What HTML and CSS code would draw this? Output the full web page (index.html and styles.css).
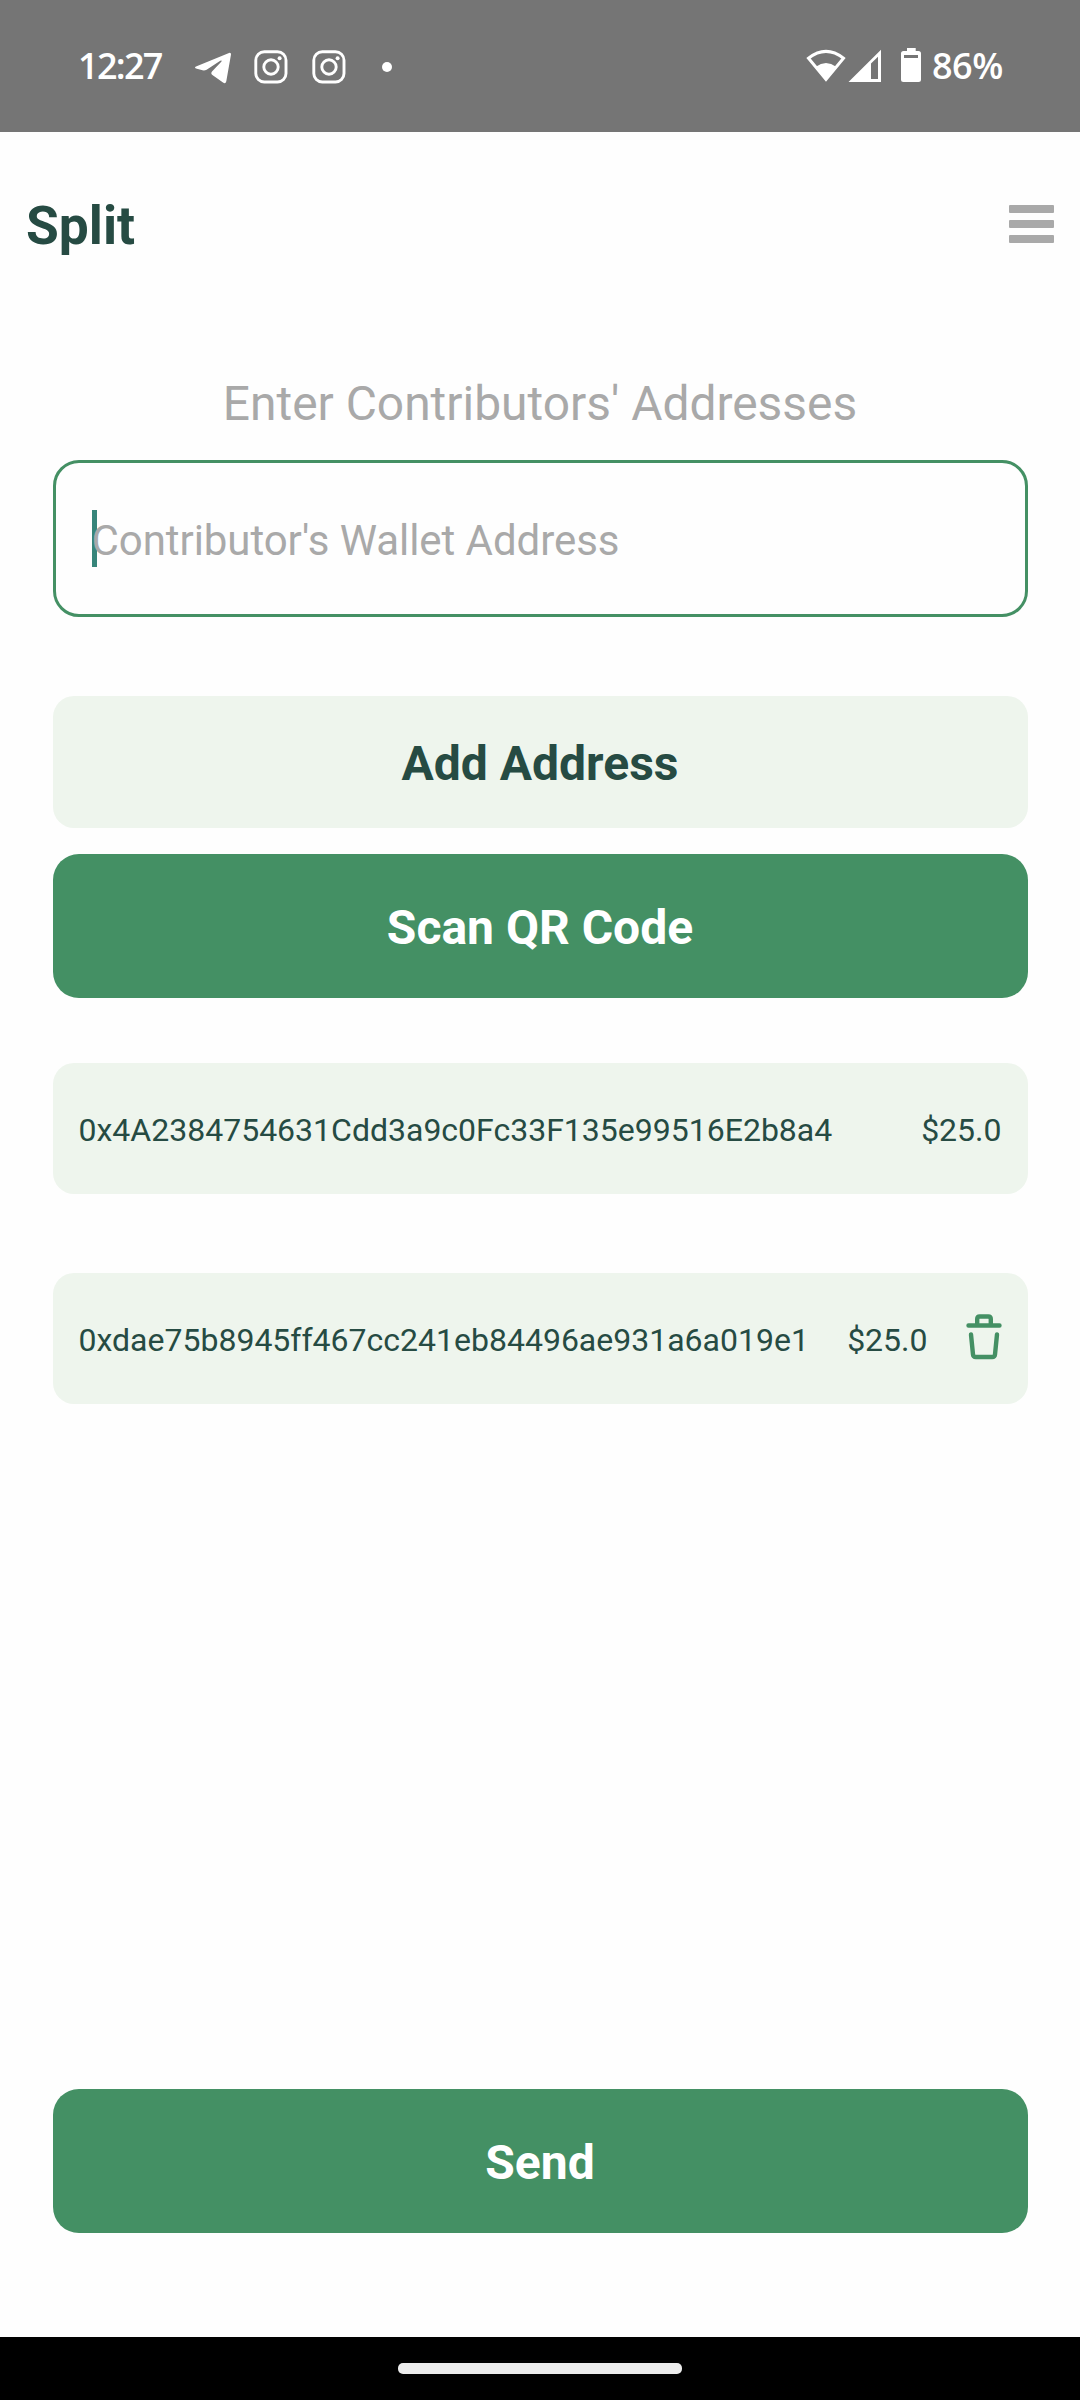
FILE: index.html
```html
<!DOCTYPE html>
<html lang="en">
<head>
<meta charset="utf-8">
<title>Split</title>
<link rel="stylesheet" href="styles.css">
</head>
<body>
<div class="screen">
  <div class="status-bar">
    <div class="status-left">
      <span class="clock">12:27</span>
      <svg class="telegram" width="38" height="34" viewBox="0 0 38 34" fill="#fff"><path d="M2 15.500 35 1.900Q37.200 1.200 37 3.500L32.300 30.300Q31.600 33.300 29 31.600L18.400 24Q16.400 22.500 18 20.600L27.500 10.500Q28.200 9.200 26.300 9.800L12.600 18.700Q10.600 19.800 8.500 19.300L2 17.600Q0 16.600 2 15.500Z"/></svg>
      <svg class="instagram" width="34" height="34" viewBox="0 0 34 34" fill="none" stroke="#fff" stroke-width="2.900"><rect x="1.800" y="1.800" width="30.200" height="30.200" rx="8.500"/><circle cx="17" cy="17" r="7.200"/><circle cx="25.600" cy="8.300" r="2" fill="#fff" stroke="none"/></svg>
      <svg class="instagram" width="34" height="34" viewBox="0 0 34 34" fill="none" stroke="#fff" stroke-width="2.900"><rect x="1.800" y="1.800" width="30.200" height="30.200" rx="8.500"/><circle cx="17" cy="17" r="7.200"/><circle cx="25.600" cy="8.300" r="2" fill="#fff" stroke="none"/></svg>
      <span class="more-dot"></span>
    </div>
    <div class="status-right">
      <svg class="wifi" width="40" height="34" viewBox="0 0 40 34"><path d="M2.500 9.200Q20-4.500 37.500 9.200L20 30.500Z" fill="none" stroke="#fff" stroke-width="3"/><path d="M9.800 17.700Q20 10.300 30.200 17.700L20 32Z" fill="#fff"/></svg>
      <svg class="signal" width="34" height="34" viewBox="0 0 34 34" fill="#fff" fill-rule="evenodd"><path d="M.500 33 33 .700V33ZM23 14.500V30H30V7.700Z"/></svg>
      <svg class="battery" width="20" height="34" viewBox="0 0 20 34" fill="#fff" fill-rule="evenodd"><path d="M6 0H14.700V3H17.500Q20 3 20 5.500V31.500Q20 34 17.500 34H2.500Q0 34 0 31.500V5.500Q0 3 2.500 3H6ZM3 7V10H17V7Z"/></svg>
      <span class="percent">86%</span>
    </div>
  </div>

  <header class="app-bar">
    <h1 class="title">Split</h1>
    <div class="menu"><span></span><span></span><span></span></div>
  </header>

  <main class="content">
    <p class="prompt">Enter Contributors' Addresses</p>
    <div class="field"><span class="caret"></span><span class="placeholder">Contributor's Wallet Address</span></div>
    <div class="button soft">Add Address</div>
    <div class="button solid scan">Scan QR Code</div>
    <div class="entry"><span class="address">0x4A2384754631Cdd3a9c0Fc33F135e99516E2b8a4</span><span class="amount">$25.0</span></div>
    <div class="entry"><span class="address">0xdae75b8945ff467cc241eb84496ae931a6a019e1</span><span class="amount">$25.0</span>
      <svg class="trash" width="36" height="46" viewBox="0 0 36 46" fill="none" stroke="#449064" stroke-width="4.400" stroke-linecap="round" stroke-linejoin="round"><path d="M2.500 11.500H33.500M11.200 11V5Q11.200 2.500 13.700 2.500H22.300Q24.800 2.500 24.800 5V11M5 20.500 7 40.500Q7.300 43 9.800 43H26.200Q28.700 43 29 40.500L31 20.500"/></svg>
    </div>
    <div class="button solid send">Send</div>
  </main>

  <div class="nav-bar"><span class="handle"></span></div>
</div>
</body>
</html>
```

FILE: styles.css
```css
* { box-sizing: border-box; }

body {
  margin: 0;
  font-family: Roboto, sans-serif;
  background: #fefefe;
}

.screen {
  display: flex;
  flex-direction: column;
  width: 1080px;
  height: 2400px;
  overflow: hidden;
}

.status-bar {
  display: flex;
  justify-content: space-between;
  height: 132px;
  padding: 0 76px 0 78px;
  background: #757575;
  color: #fff;
  font: 600 36px/36px "Open Sans", sans-serif;
}

.status-left,
.status-right {
  display: flex;
  align-items: flex-start;
}

.clock {
  width: 116px;
  padding-top: 48px;
  letter-spacing: -1.7px;
}

.telegram { margin: 51px 22px 0 0; }
.instagram { margin: 50px 24px 0 0; }

.more-dot {
  width: 10px;
  height: 10px;
  margin: 62px 0 0 12px;
  border-radius: 50%;
  background: #fff;
}

.wifi { margin-top: 49px; }
.signal { margin: 49px 19px 0 2px; }
.battery { margin: 48px 11px 0 0; }

.percent {
  width: 72px;
  padding-top: 48px;
  letter-spacing: -0.5px;
}

.app-bar {
  display: flex;
  justify-content: space-between;
  align-items: center;
  height: 188px;
  padding: 0 26px;
}

.title {
  margin: 0;
  color: #264b43;
  font-size: 53.3px;
  font-weight: 700;
  line-height: 62px;
}

.menu {
  display: flex;
  flex-direction: column;
  gap: 7px;
  width: 45px;
  margin-top: -4px;
}

.menu span {
  height: 8px;
  border-radius: 1px;
  background: #a9a9a9;
}

.content {
  display: flex;
  flex: 1;
  flex-direction: column;
  padding: 56px 52.5px 0;
}

.prompt {
  margin: 0 0 28px;
  color: #a9a9a9;
  font-size: 47.9px;
  line-height: 56px;
  text-align: center;
}

.field {
  display: flex;
  align-items: center;
  height: 157px;
  margin-bottom: 79px;
  padding-left: 36px;
  border: 3px solid #449064;
  border-radius: 26px;
}

.caret {
  width: 5px;
  height: 57px;
  margin-right: -5px;
  background: #37857a;
}

.placeholder {
  position: relative;
  padding-top: 5px;
  color: #a9a9a9;
  font-size: 42px;
  letter-spacing: -0.06px;
  line-height: 50px;
}

.button {
  display: flex;
  align-items: center;
  justify-content: center;
  font-size: 48px;
  font-weight: 700;
}

.soft {
  height: 132px;
  margin-bottom: 26px;
  padding-top: 3px;
  border-radius: 21px;
  background: #eef5ed;
  color: #264b43;
}

.solid {
  height: 144px;
  padding-top: 3px;
  border-radius: 26px;
  background: #449064;
  color: #fff;
}

.scan { margin-bottom: 65px; }

.entry {
  display: flex;
  align-items: center;
  height: 131px;
  margin-bottom: 79px;
  padding: 0 26px;
  border-radius: 21px;
  background: #eef5ed;
  color: #264b43;
  font-size: 32px;
  line-height: 37px;
}

.address,
.amount { padding-top: 4px; }

.amount { margin-left: auto; }

.trash { margin: -4px 0 0 38px; }

.send {
  margin-top: auto;
  margin-bottom: 104px;
}

.nav-bar {
  display: flex;
  justify-content: center;
  height: 63px;
  padding-top: 26px;
  background: #000;
}

.handle {
  width: 284px;
  height: 11px;
  border-radius: 5px;
  background: #ececec;
}
```
